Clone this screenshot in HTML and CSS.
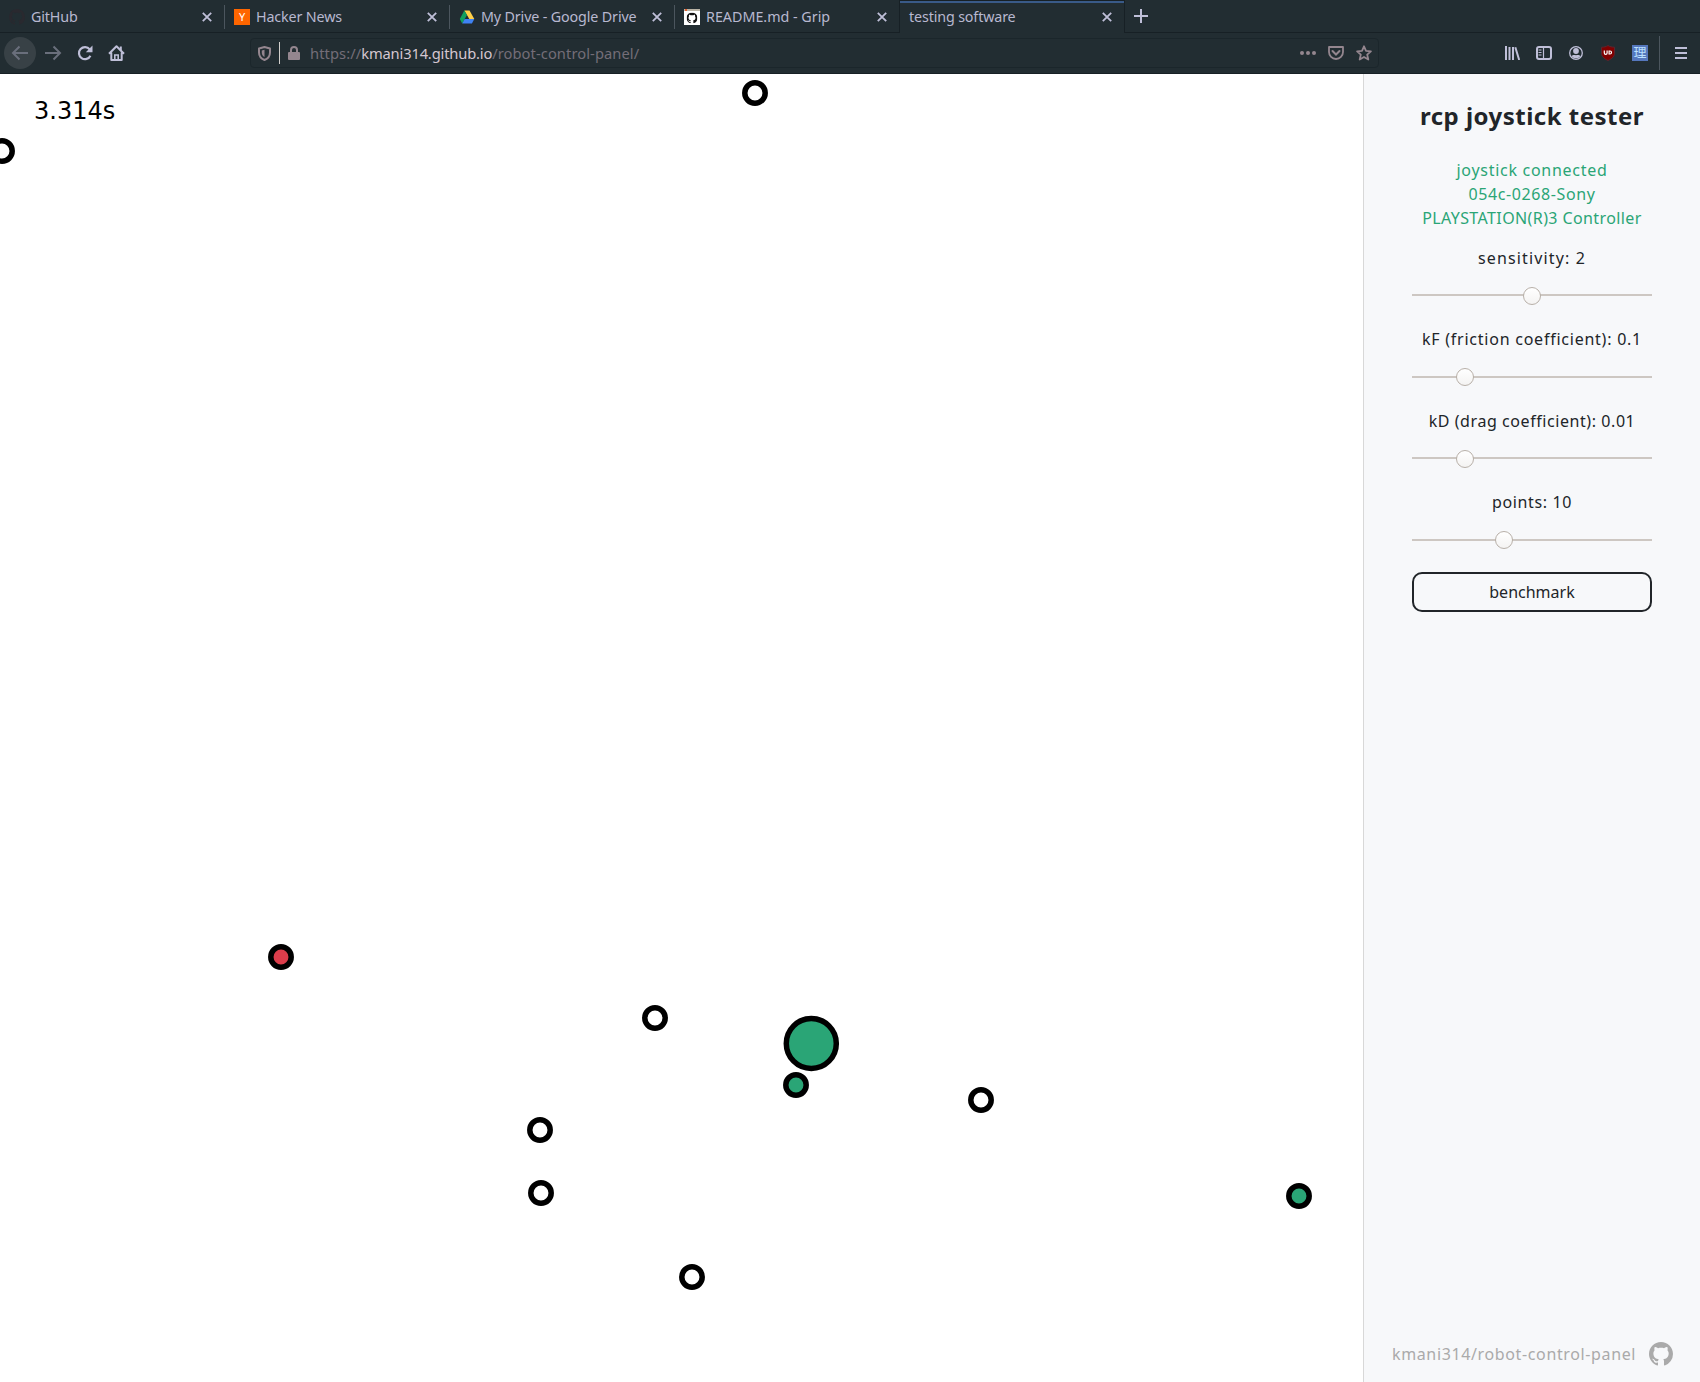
FILE: index.html
```html
<!DOCTYPE html>
<html lang="en">
<head>
<meta charset="utf-8">
<title>testing software</title>
<link rel="stylesheet" href="styles.css">
</head>
<body>
<svg class="defs" width="0" height="0">
  <symbol id="close" viewBox="0 0 10 10"><path d="M.8.8l8.4 8.4M9.2.8L.8 9.2" stroke="currentColor" stroke-width="1.8" fill="none"/></symbol>
  <symbol id="octocat" viewBox="0 0 16 16"><path fill="currentColor" fill-rule="evenodd" d="M8 0C3.58 0 0 3.58 0 8c0 3.54 2.29 6.53 5.47 7.59.4.07.55-.17.55-.38 0-.19-.01-.82-.01-1.49-2.01.37-2.53-.49-2.69-.94-.09-.23-.48-.94-.82-1.13-.28-.15-.68-.52-.01-.53.63-.01 1.08.58 1.23.82.72 1.21 1.87.87 2.33.66.07-.52.28-.87.51-1.07-1.78-.2-3.64-.89-3.64-3.95 0-.87.31-1.59.82-2.15-.08-.2-.36-1.02.08-2.12 0 0 .67-.21 2.2.82.64-.18 1.32-.27 2-.27s1.36.09 2 .27c1.53-1.04 2.2-.82 2.2-.82.44 1.1.16 1.92.08 2.12.51.56.82 1.27.82 2.15 0 3.07-1.87 3.75-3.65 3.95.29.25.54.73.54 1.48 0 1.07-.01 1.93-.01 2.2 0 .21.15.46.55.38A8.01 8.01 0 0016 8c0-4.42-3.58-8-8-8z"/></symbol>
</svg>

<header class="browser">
  <div class="tabs">
    <div class="tab tab-first">
      <svg class="favicon dim" width="16" height="16"><use href="#octocat"/></svg>
      <span class="label">GitHub</span>
      <svg class="close" width="10" height="10"><use href="#close"/></svg>
    </div>
    <div class="tab">
      <span class="favicon yc">Y</span>
      <span class="label">Hacker News</span>
      <svg class="close" width="10" height="10"><use href="#close"/></svg>
    </div>
    <div class="tab">
      <svg class="favicon" width="16" height="16" viewBox="0 0 16 16"><path d="M5.3 1.5h5.2L15.3 10h-5z" fill="#ffcf48"/><path d="M5.3 1.5L8 6.1 3.2 14.4.8 10z" fill="#11a05f"/><path d="M5.7 10h9.6l-2.4 4.4H3.2z" fill="#3f82f3"/></svg>
      <span class="label">My Drive - Google Drive</span>
      <svg class="close" width="10" height="10"><use href="#close"/></svg>
    </div>
    <div class="tab">
      <svg class="favicon" width="16" height="16" viewBox="0 0 16 16"><path fill="#fff" d="M0 0h16v16H0z"/><path fill="#b9b3a5" d="M0 0h16v2H0z"/><path fill="#e06030" d="M1 0h2v2H1z"/><svg x="2.5" y="3.5" width="11" height="11"><use href="#octocat" color="#111"/></svg></svg>
      <span class="label wide">README.md - Grip</span>
      <svg class="close" width="10" height="10"><use href="#close"/></svg>
    </div>
    <div class="tab active">
      <span class="label">testing software</span>
      <svg class="close" width="10" height="10"><use href="#close"/></svg>
    </div>
    <svg class="newtab" width="14" height="14" viewBox="0 0 14 14"><path d="M7 0v14M0 7h14" stroke="currentColor" stroke-width="2"/></svg>
  </div>

  <div class="toolbar">
    <div class="nav">
      <span class="back"><svg width="18" height="16" viewBox="0 0 18 16"><path d="M17 8H2M8.5 1.5L2 8l6.500 6.500" fill="none" stroke="currentColor" stroke-width="2"/></svg></span>
      <svg class="forward" width="17" height="16" viewBox="0 0 17 16"><path d="M0 8h15M8.500 1.500L15 8l-6.500 6.500" fill="none" stroke="currentColor" stroke-width="2"/></svg>
      <svg class="reload" width="16" height="16" viewBox="0 0 16 16"><path d="M12.700 4.400A6 6 0 1 0 13.400 10.700" fill="none" stroke="currentColor" stroke-width="2.200"/><path d="M15.500.500v6.700H8.800z" fill="currentColor"/></svg>
      <svg class="home" width="17" height="16" viewBox="0 0 17 16"><path d="M1 8.700L8.500 1.300 16 8.700M3.300 7.500V15h10.400V7.500" fill="none" stroke="currentColor" stroke-width="2" stroke-linejoin="round"/><path d="M6.800 14.500V10h3.400v4.500" fill="none" stroke="currentColor" stroke-width="1.600"/><path d="M11.800 1.500h2v4h-2z" fill="currentColor"/></svg>
    </div>
    <div class="urlbar">
      <svg width="13" height="15" viewBox="0 0 13 15"><path d="M6.500 1L12 2.500v4c0 3.500-2 6-5.500 7.500C3 12.500 1 10 1 6.500v-4z" fill="none" stroke="currentColor" stroke-width="2" stroke-linejoin="round"/><path d="M6.500 3.800v7.200C4.700 10 3.800 8.500 3.800 6.500v-2z" fill="currentColor"/></svg>
      <i class="bar"></i>
      <svg class="lock" width="12" height="14" viewBox="0 0 12 14"><path d="M3 7V4a3 3 0 0 1 6 0v3" fill="none" stroke="currentColor" stroke-width="2"/><rect y="6" width="12" height="8" rx="1" fill="currentColor"/></svg>
      <span class="url">https://<b>kmani314.github.io</b>/robot-control-panel/</span>
      <svg class="dots" width="16" height="4" viewBox="0 0 16 4" fill="currentColor"><circle cx="2" cy="2" r="2"/><circle cx="8" cy="2" r="2"/><circle cx="14" cy="2" r="2"/></svg>
      <svg class="pocket" width="16" height="14" viewBox="0 0 16 14"><path d="M1 1h14v5a7 7 0 0 1-14 0z" fill="none" stroke="currentColor" stroke-width="1.800" stroke-linejoin="round"/><path d="M4.500 5L8 8.500 11.500 5" fill="none" stroke="currentColor" stroke-width="2" stroke-linecap="round"/></svg>
      <svg class="star" width="16" height="16" viewBox="0 0 16 16"><path d="M8 1.300l2 4.500 4.900.5-3.700 3.300 1.100 4.900L8 12l-4.300 2.500 1.100-4.900L1.100 6.300 6 5.800z" fill="none" stroke="currentColor" stroke-width="1.800" stroke-linejoin="round"/></svg>
    </div>
    <div class="tools">
      <svg width="15" height="14" viewBox="0 0 15 14"><path d="M1 0v14M4.500 1v13M8 1v13M10.300 1.200L14.200 14" fill="none" stroke="currentColor" stroke-width="2"/></svg>
      <svg width="16" height="14" viewBox="0 0 16 14"><rect x="1" y="1" width="14" height="12" rx="2" fill="none" stroke="currentColor" stroke-width="2"/><path d="M7.500 1v12M2.500 4h3M2.500 6.500h3M2.500 9h3" stroke="currentColor" stroke-width="1.200"/></svg>
      <svg width="14" height="14" viewBox="0 0 14 14"><circle cx="7" cy="7" r="6.300" fill="none" stroke="currentColor" stroke-width="1.300"/><circle cx="7" cy="5" r="2.900" fill="currentColor"/><path d="M2.500 10c2-1.700 3-.8 4.500-.8s2.500-.9 4.500.8C10.500 11.800 9 12.300 7 12.300S3.500 11.800 2.500 10z" fill="currentColor"/></svg>
      <svg width="14" height="16" viewBox="0 0 14 16"><path d="M7 .5c2 1.300 4 1.700 6.500 1.700v6c0 3.500-3 5.700-6.500 7.300C3.500 13.900.5 11.700.5 8.200v-6C3 2.200 5 1.800 7 .5z" fill="#800000" stroke="#5b2630"/><path d="M3.300 5.500v2.500a1.400 1.400 0 0 0 2.800 0V5.500M8.100 6v3h.9a1.500 1.500 0 0 0 0-3z" fill="none" stroke="#fff" stroke-width="1.200"/></svg>
      <span class="kanji">理</span>
      <i class="divider"></i>
      <svg width="12" height="12" viewBox="0 0 12 12"><path d="M0 1h12M0 6h12M0 11h12" stroke="currentColor" stroke-width="2"/></svg>
    </div>
  </div>
</header>

<main class="page">
  <svg class="field" width="1363" height="1308" viewBox="0 74 1363 1308">
    <text x="34" y="118.500" class="timer">3.314s</text>
    <g class="points">
      <circle cx="755" cy="93" r="10.200"/>
      <circle cx="2" cy="151" r="10.200"/>
      <circle cx="281" cy="957" r="10.200" class="red"/>
      <circle cx="655" cy="1018" r="10.200"/>
      <circle cx="796" cy="1085" r="10.200" class="green"/>
      <circle cx="981" cy="1100" r="10.200"/>
      <circle cx="540" cy="1130" r="10.200"/>
      <circle cx="541" cy="1193" r="10.200"/>
      <circle cx="692" cy="1277" r="10.200"/>
      <circle cx="1299" cy="1196" r="10.200" class="green"/>
      <circle cx="811.300" cy="1043.500" r="25" class="green"/>
    </g>
  </svg>

  <aside class="panel">
    <h1>rcp joystick tester</h1>
    <p class="status"><span class="device-state">joystick connected</span><span class="device-id">054c-0268-Sony</span><span class="device-name">PLAYSTATION(R)3 Controller</span></p>
    <label class="control sensitivity"><span>sensitivity: 2</span><span class="track"><i class="thumb low" style="left:111px"></i></span></label>
    <label class="control friction"><span>kF (friction coefficient): 0.1</span><span class="track"><i class="thumb" style="left:44px"></i></span></label>
    <label class="control drag"><span>kD (drag coefficient): 0.01</span><span class="track"><i class="thumb low" style="left:44px"></i></span></label>
    <label class="control count"><span>points: 10</span><span class="track"><i class="thumb" style="left:83px"></i></span></label>
    <button class="benchmark">benchmark</button>
    <footer><span>kmani314/robot-control-panel</span><svg width="24" height="24"><use href="#octocat"/></svg></footer>
  </aside>
</main>
</body>
</html>
```

FILE: styles.css
```css
* { box-sizing: border-box; }
body {
  margin: 0;
  width: 1700px;
  height: 1382px;
  overflow: hidden;
  background: #fff;
  font-family: "Noto Sans", "Noto Sans CJK JP", sans-serif;
}
svg { display: block; flex: none; }
.defs { position: absolute; }

.browser { height: 74px; background: #222d32; color: #bfbfd8; border-bottom: 1px solid #172025; }
.tabs { display: flex; height: 33px; align-items: stretch; border-bottom: 1px solid #172025; }
.tab {
  display: flex;
  align-items: center;
  width: 225px;
  padding: 2px 13px 0 9px;
  font-size: 14.3px;
  letter-spacing: -.14px;
  background: linear-gradient(#4c565e, #4c565e) right 5px / 1px 24px no-repeat;
}
.tab:nth-child(4) { width: 224px; padding-right: 12px; background: none; }
.tab .label { flex: 1; margin-left: 6px; white-space: nowrap; color: #b8b8d0; line-height: 20px; }
.tab .wide { letter-spacing: 0; }
.active {
  width: 226px;
  height: 33px;
  padding: 0 12px 0 9px;
  background: #222d32;
  border: 1px solid #172025;
  border-bottom: 0;
  box-shadow: inset 0 2px #395a88;
}
.tab.active .label { margin-left: 0; }
.favicon { width: 16px; height: 16px; flex: none; }
.dim { color: #29292f; }
.yc { background: #f60; color: #fff; font: 11px/16px "Noto Sans", sans-serif; text-align: center; }
.newtab { margin: 9px 0 0 9px; }

.toolbar { display: flex; align-items: center; height: 40px; }
.nav { display: flex; align-items: center; width: 250px; padding-left: 4px; }
.back {
  display: flex;
  align-items: center;
  justify-content: center;
  width: 32px;
  height: 32px;
  border-radius: 50%;
  background: #384146;
  color: #6a6f7c;
}
.forward { margin-left: 9px; color: #6a6f7c; }
.reload { margin-left: 15px; }
.home { margin-left: 15px; }
.urlbar {
  display: flex;
  align-items: center;
  width: 1129px;
  height: 30px;
  padding-left: 7px;
  border: 1px solid #1b262b;
  border-radius: 4px;
  color: #94868f;
}
.bar { width: 1px; height: 22px; margin: 0 8px 0 8px; background: #d2cfcc; }
.url { flex: 1; margin-left: 10px; font-size: 14.7px; line-height: 20px; letter-spacing: .08px; color: #746d78; white-space: nowrap; }
.url b { font-weight: 400; letter-spacing: -.16px; color: #d5c6d0; }
.pocket { margin-left: 12px; }
.star { margin: 0 6px 0 12px; }
.tools { display: flex; align-items: center; margin-left: 126px; }
.tools svg:nth-of-type(2) { margin-left: 16px; }
.tools svg:nth-of-type(3) { margin-left: 17px; }
.tools svg:nth-of-type(4) { margin-left: 18px; }
.kanji { width: 16px; height: 16px; margin-left: 17px; background: #5577bd; color: #b9e0ff; font: 13px/14px "Noto Sans CJK JP", sans-serif; text-align: center; }
.divider { width: 1px; height: 34px; margin: 0 15px 0 11px; background: #4c565e; }

.page { display: flex; height: 1308px; }
.timer { font: 24px "DejaVu Sans", sans-serif; }
.points circle { fill: none; stroke: #000; stroke-width: 5.500px; }
.points .green { fill: #2aa576; }
.points .red { fill: #dc3d4b; }

.panel {
  display: flex;
  flex-direction: column;
  width: 337px;
  padding: 0 48px;
  border-left: 1px solid #d8d8d8;
  background: #f7f8fa;
  color: #212529;
  font-size: 16px;
  line-height: 24px;
  text-align: center;
  white-space: nowrap;
}
h1 { margin: 26px 0 0; font-size: 24px; line-height: 32px; font-weight: 700; letter-spacing: .48px; }
.status { display: flex; flex-direction: column; margin: 26px 0 16px; color: #2aa576; }
.device-state { letter-spacing: .72px; }
.device-id { letter-spacing: .62px; }
.device-name { letter-spacing: .4px; }
.control { display: flex; flex-direction: column; height: 81.500px; }
.sensitivity { height: 81px; letter-spacing: 1.15px; }
.friction { height: 82px; letter-spacing: .76px; }
.friction .track { margin-top: 25px; }
.drag { height: 81px; letter-spacing: .57px; }
.count { height: 82px; letter-spacing: .64px; }
.track { position: relative; height: 2px; margin-top: 24px; background: #cdc7c2; }
.count .track { margin-top: 25px; }
.thumb {
  position: absolute;
  top: -8px;
  width: 18px;
  height: 18px;
  border: 1px solid #b8b0a8;
  border-radius: 50%;
  background: linear-gradient(#fff, #f4f3f2);
}
.thumb.low { top: -7px; }
.benchmark {
  flex: none;
  height: 40px;
  padding: 0;
  border: 2px solid #212529;
  border-radius: 10px;
  background: transparent;
  color: #212529;
  font: 16px "Noto Sans", sans-serif;
}
footer { display: flex; align-items: center; margin: auto -21px 16px -20px; color: #aaa; letter-spacing: .63px; }
footer span { flex: 1; text-align: left; }
```
